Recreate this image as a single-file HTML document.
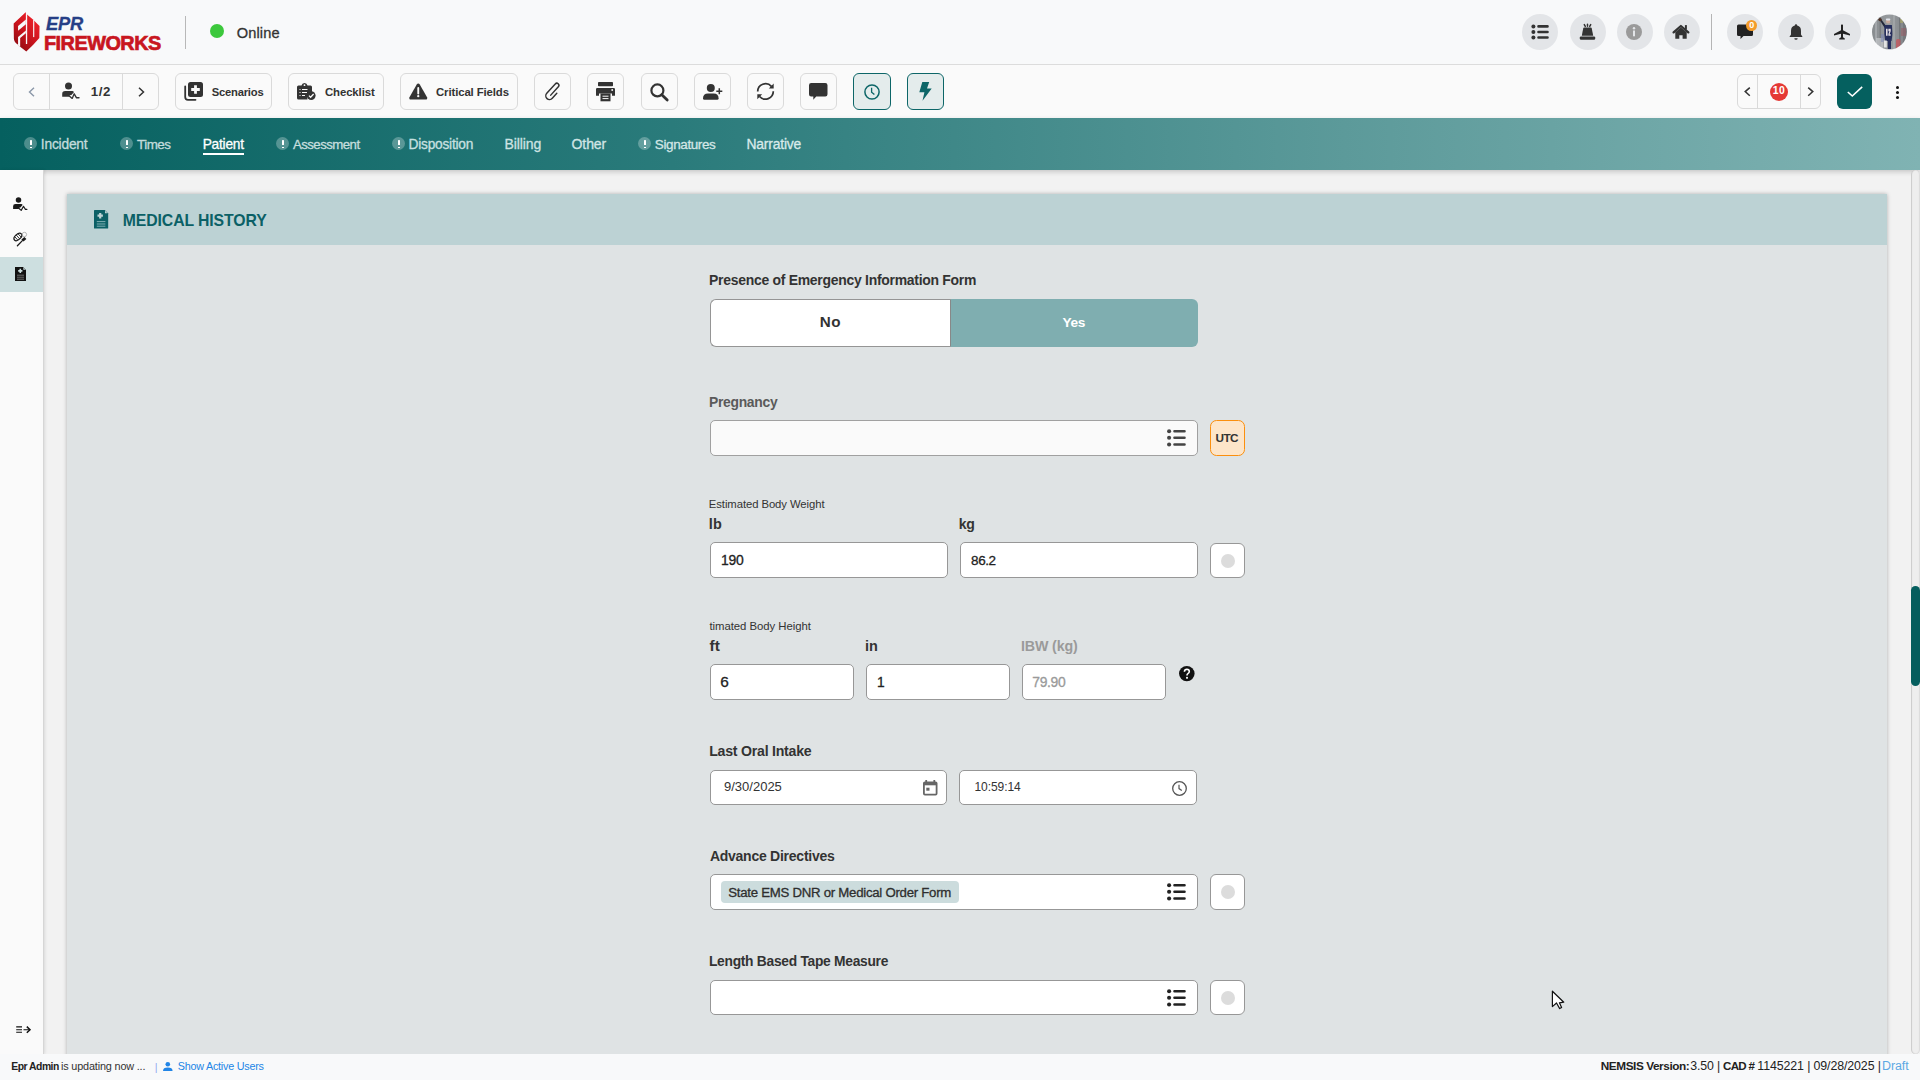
<!DOCTYPE html>
<html><head><meta charset="utf-8">
<style>
*{box-sizing:border-box;margin:0;padding:0}
html,body{width:1920px;height:1080px;overflow:hidden;background:#f2f2f2;font-family:"Liberation Sans",sans-serif;color:#333}
.a{position:absolute}
.t{position:absolute;white-space:pre;font-family:"Liberation Sans",sans-serif}
svg{position:absolute;overflow:visible}
#hdr{left:0;top:0;width:1920px;height:65px;background:#f8f9fa;border-bottom:1px solid #dcdcdc}
#tb{left:0;top:65px;width:1920px;height:53px;background:#fafafa}
#nav{left:0;top:118px;width:1920px;height:52px;background:linear-gradient(90deg,#05605f 0%,#2a7b7b 35%,#5c9a9a 70%,#80b3b3 100%);box-shadow:0 2px 5px rgba(0,0,0,.18)}
#side{left:0;top:170px;width:44px;height:884px;background:#fafafa;border-right:1px solid #d6d6d6;box-shadow:1px 0 3px rgba(0,0,0,.10)}
#foot{left:0;top:1054px;width:1920px;height:26px;background:#f8f9fa}
#card{left:67px;top:194px;width:1820px;height:880px;background:#dfe3e4;box-shadow:0 0 4px rgba(0,0,0,.28)}
#cardh{left:67px;top:194px;width:1820px;height:51px;background:#bcd2d4}
.btn{position:absolute;top:73px;height:37px;border:1px solid #dadada;border-radius:6px;background:#fafafa}
.sq{width:37px}
.act{background:#e4ecec;border:1.4px solid #0d6668}
.circ{position:absolute;top:14px;width:36px;height:36px;border-radius:50%;background:#e3e5e8}
.ex{position:absolute;top:137.1px;width:13.3px;height:13.3px;border-radius:50%;background:rgba(255,255,255,.28)}
.ex:after{content:"";position:absolute;left:5.8px;top:2.8px;width:1.8px;height:5.6px;background:#fff;border-radius:.6px}
.ex:before{content:"";position:absolute;left:5.8px;top:9.6px;width:1.8px;height:1.6px;background:#fff}
.inp{position:absolute;border:1px solid #979797;border-radius:5px;background:#fff}
.rb{position:absolute;width:35px;border:1px solid #979797;border-radius:6px;background:#fff}
.rb:after{content:"";position:absolute;left:50%;top:50%;width:14px;height:14px;margin:-7px 0 0 -7px;border-radius:50%;background:#dcdcdc}
</style></head><body>
<div id="hdr" class="a"></div>
<div id="tb" class="a"></div>
<div id="card" class="a"></div>
<div id="cardh" class="a"></div>
<div id="nav" class="a"></div>
<div id="side" class="a"></div>
<div id="foot" class="a"></div>

<!-- scrollbar -->
<div class="a" style="left:1911px;top:170px;width:9px;height:884px;background:#eeeeee;border-radius:5px;box-shadow:inset 1px 0 1px rgba(0,0,0,.15),inset -1px 0 1px rgba(0,0,0,.08)"></div>
<div class="a" style="left:1911px;top:586px;width:9px;height:100px;background:#055e5e;border-radius:5px"></div>

<!-- ============ HEADER ============ -->
<svg style="left:10px;top:10px" width="34" height="44" viewBox="0 0 835 1080">
 <defs><linearGradient id="lg" x1="0.8" y1="0.1" x2="0.2" y2="0.9"><stop offset="0" stop-color="#f0212a"/><stop offset=".55" stop-color="#c8141d"/><stop offset="1" stop-color="#950b12"/></linearGradient></defs>
 <path d="M385 55 L425 115 L565 235 L595 262 L725 390 L720 690 Q560 880 400 1020 L250 900 L190 850 Q95 780 95 700 L90 330 Z" fill="url(#lg)"/>
 <rect x="390" y="50" width="32" height="785" fill="#f8f9fa"/>
 <rect x="568" y="245" width="28" height="420" fill="#f8f9fa"/>
 <path d="M198 395 L390 230 L390 352 L198 508 Z" fill="#f8f9fa"/>
 <path d="M198 660 L390 505 L390 568 L250 688 L250 905 L185 855 L198 850 Z" fill="#f8f9fa"/>
</svg>
<div class="a" style="left:185px;top:16px;width:1px;height:33px;background:#b8b8b8"></div>
<div class="a" style="left:210px;top:23.8px;width:14.2px;height:14.2px;border-radius:50%;background:#3cc83c"></div>

<div class="circ" style="left:1522px"></div>
<svg style="left:1531px;top:24px" width="18" height="16" viewBox="0 0 18 16">
 <circle cx="2.4" cy="2.4" r="2" fill="#333"/><circle cx="2.4" cy="8" r="2" fill="#333"/><circle cx="2.4" cy="13.5" r="2" fill="#333"/>
 <path d="M7.5 2.4H16.5M7.5 8H16.5M7.5 13.5H16.5" stroke="#333" stroke-width="2.6" stroke-linecap="round"/>
</svg>
<div class="circ" style="left:1569.5px"></div>
<svg style="left:1575px;top:20px" width="24" height="20" viewBox="1575 20 24 20">
 <path d="M1583.2 28.4 Q1583.4 27.6 1584.2 27.6 H1590.8 Q1591.6 27.6 1591.8 28.4 L1593.2 35.8 H1581.8 Z" fill="#333"/>
 <rect x="1579.8" y="36.4" width="15.4" height="3.4" rx="1.2" fill="#333"/>
 <path d="M1584.3 24.6 L1585.3 26.4 M1587.5 24.2 V26.2 M1590.7 24.6 L1589.7 26.4" stroke="#333" stroke-width="1.5" stroke-linecap="round"/>
</svg>
<div class="circ" style="left:1616.5px"></div>
<svg style="left:1626px;top:24px" width="16" height="16" viewBox="0 0 16 16">
 <circle cx="8" cy="8" r="8" fill="#9a9a9a"/>
 <circle cx="8" cy="4.3" r="1.2" fill="#e3e5e8"/><rect x="7" y="6.5" width="2" height="5.8" fill="#e3e5e8"/>
</svg>
<div class="circ" style="left:1663.5px"></div>
<svg style="left:1670px;top:22px" width="22" height="20" viewBox="1670 22 22 20">
 <path d="M1673.6 32.4 L1680.9 26 L1688.3 32.4" stroke="#333" stroke-width="2.3" fill="none" stroke-linecap="round" stroke-linejoin="round"/>
 <rect x="1684.9" y="25.1" width="2" height="4.5" fill="#333"/>
 <path d="M1675.3 32.3 L1680.9 27.6 L1686.7 32.3 V38.8 H1682.6 V35.2 H1679.3 V38.8 H1675.3 Z" fill="#333"/>
</svg>
<div class="a" style="left:1711px;top:14px;width:1px;height:36px;background:#b5b5b5"></div>
<div class="circ" style="left:1726.5px"></div>
<svg style="left:1737px;top:24px" width="16" height="16" viewBox="0 0 16 16">
 <path d="M1.5 0.5 H14.5 Q16 0.5 16 2 V10.5 Q16 12 14.5 12 H6.5 L3.5 15 L3.5 12 H1.5 Q0 12 0 10.5 V2 Q0 0.5 1.5 0.5 Z" fill="#222"/>
</svg>
<div class="a" style="left:1746.2px;top:20.1px;width:10.8px;height:10.8px;border-radius:50%;background:#f39c2b"></div>
<div class="t" style="left:1749.3px;top:20.8px;font-size:9px;line-height:9px;font-weight:bold;color:#fff">0</div>
<div class="circ" style="left:1777.5px"></div>
<svg style="left:1788.5px;top:23.8px" width="14" height="16" viewBox="0 0 14 16">
 <path d="M7 0.3 Q8.2 0.3 8.2 1.6 Q12 2.4 12 7 V10.5 L13.6 13 H0.4 L2 10.5 V7 Q2 2.4 5.8 1.6 Q5.8 0.3 7 0.3 Z" fill="#333"/>
 <path d="M5.3 14.3 H8.7 Q8.7 15.8 7 15.8 Q5.3 15.8 5.3 14.3Z" fill="#333"/>
</svg>
<div class="circ" style="left:1824.5px"></div>
<svg style="left:1834px;top:23.8px" width="16" height="16" viewBox="0 0 16 16">
 <path d="M7 0.8 Q8 0 9 0.8 V6.2 L16 10 V11.5 L9 9.8 V13.2 L10.8 14.6 V15.6 H5.2 V14.6 L7 13.2 V9.8 L0 11.5 V10 L7 6.2 Z" fill="#222"/>
</svg>
<svg style="left:1872px;top:14px" width="35" height="36" viewBox="0 0 35 36">
 <defs><clipPath id="av"><circle cx="17.5" cy="18" r="17.5"/></clipPath>
 <linearGradient id="avg" x1="0" y1="0" x2="1" y2="0"><stop offset="0" stop-color="#868a8d"/><stop offset=".5" stop-color="#979b9e"/><stop offset="1" stop-color="#7c8084"/></linearGradient>
 <filter id="avb"><feGaussianBlur stdDeviation="0.45"/></filter></defs>
 <g clip-path="url(#av)"><g filter="url(#avb)">
  <rect x="-2" y="-2" width="39" height="40" fill="url(#avg)"/>
  <rect x="3" y="0" width="2" height="36" fill="#b4b7ba" opacity=".6"/>
  <rect x="7.5" y="0" width="1.5" height="36" fill="#65696d" opacity=".5"/>
  <rect x="21" y="0" width="2" height="36" fill="#b0b3b6" opacity=".5"/>
  <rect x="27" y="0" width="1.6" height="36" fill="#5d6164" opacity=".5"/>
  <rect x="31" y="4" width="3" height="30" fill="#6d7175" opacity=".6"/>
  <rect x="4" y="24" width="7" height="12" fill="#c5c8ca" opacity=".7"/>
  <rect x="9" y="20" width="3" height="8" fill="#7e88b4" opacity=".6"/>
  <rect x="24" y="25" width="4.5" height="11" rx="1.5" fill="#c05a60" opacity=".85"/>
  <rect x="29" y="14" width="5" height="8" fill="#9a5a62" opacity=".5"/>
  <rect x="28" y="5" width="3" height="4" fill="#b7b35a" opacity=".5"/>
  <path d="M7.6 6 L9.2 5.2 L14.4 12.6 L12.8 14 Z" fill="#232838"/>
  <circle cx="8" cy="5.6" r="1.7" fill="#4e3328"/>
  <circle cx="16.1" cy="7.4" r="2.2" fill="#c7a89a"/>
  <rect x="13.9" y="4.6" width="4.4" height="2" rx="1" fill="#dfe3ea"/>
  <path d="M12.4 11 H19.9 L20.4 20 L19.6 27 H13.2 L12.3 20 Z" fill="#262f5c"/>
  <path d="M14 14.7 H15.6 V21.7 H14 Z M16.4 14.7 H18.7 V17.2 L17.6 20.2 H18.7 V21.7 H16.4 V20 L17.4 17.3 H16.4 Z" fill="#e3dde3"/>
  <rect x="11.8" y="26.5" width="3" height="7" fill="#e4e4e4"/>
  <rect x="15.8" y="26.5" width="3.2" height="8.5" fill="#262f5c"/>
 </g></g>
</svg>

<!-- ============ TOOLBAR ============ -->
<div class="btn" style="left:13px;width:146px"></div>
<div class="a" style="left:49px;top:74px;width:1px;height:35px;background:#dadada"></div>
<div class="a" style="left:122px;top:74px;width:1px;height:35px;background:#dadada"></div>
<svg style="left:27.5px;top:86.5px" width="7" height="10" viewBox="0 0 7 10"><path d="M6 0.8 L1.5 5 L6 9.2" stroke="#8a97a8" stroke-width="1.4" fill="none"/></svg>
<svg style="left:137.5px;top:86.5px" width="7" height="10" viewBox="0 0 7 10"><path d="M1 0.8 L5.5 5 L1 9.2" stroke="#333" stroke-width="1.5" fill="none"/></svg>
<svg style="left:55px;top:78px" width="30" height="25" viewBox="55 78 30 25">
 <circle cx="68.5" cy="85.9" r="3.5" fill="#333"/>
 <path d="M62.2 96.8 V93.9 Q62.2 91.1 65.2 91.1 H72.3 Q73.6 91.2 73.9 92.2 L71.4 95.1 L69.8 95.2 L69 96.8 Z" fill="#333"/>
 <path d="M69.3 95.9 L72.2 98.4 L74.2 93.8 L76.4 97.7 H79" stroke="#333" stroke-width="1.35" fill="none" stroke-linejoin="round" stroke-linecap="round"/>
</svg>

<div class="btn" style="left:175px;width:97px"></div>
<svg style="left:184.2px;top:82px" width="19" height="19" viewBox="0 0 19 19">
 <path d="M1.2 4.5 V15 Q1.2 17.8 4 17.8 H11.5" stroke="#333" stroke-width="1.8" fill="none" stroke-linecap="round"/>
 <rect x="4" y="0" width="15" height="15" rx="2.5" fill="#333"/>
 <path d="M11.5 3.2 V11.8 M7.2 7.5 H15.8" stroke="#fafafa" stroke-width="2.8"/>
</svg>
<div class="btn" style="left:288px;width:96px"></div>
<svg style="left:297px;top:83.2px" width="19" height="17" viewBox="0 0 19 17">
 <path d="M1.5 2.5 H4.5 Q5 0 7.5 0 Q10 0 10.5 2.5 H13.5 Q15 2.5 15 4 V9.5 A5.5 5.5 0 0 0 10.5 16.5 H1.5 Q0 16.5 0 15 V4 Q0 2.5 1.5 2.5 Z" fill="#333"/>
 <circle cx="7.5" cy="2.2" r="0.9" fill="#fafafa"/>
 <path d="M2.5 6.5 H3.5 M5 6.5 H10.5 M2.5 9.5 H3.5 M5 9.5 H10 M2.5 12.5 H3.5 M5 12.5 H8" stroke="#fafafa" stroke-width="1.1"/>
 <circle cx="14.2" cy="12.6" r="4.4" fill="#333"/>
 <path d="M12 12.6 L13.6 14.2 L16.6 11" stroke="#fafafa" stroke-width="1.3" fill="none"/>
</svg>
<div class="btn" style="left:400px;width:118px"></div>
<svg style="left:409.4px;top:82.5px" width="18.5" height="17" viewBox="0 0 18.5 17">
 <path d="M9.25 0.6 Q10.2 0.6 10.8 1.6 L18 14.2 Q18.8 16.4 16.6 16.6 H1.9 Q-0.3 16.4 0.5 14.2 L7.7 1.6 Q8.3 0.6 9.25 0.6 Z" fill="#333"/>
 <path d="M9.25 5 V10.5" stroke="#fafafa" stroke-width="1.9" stroke-linecap="round"/>
 <circle cx="9.25" cy="13.2" r="1.15" fill="#fafafa"/>
</svg>

<div class="btn sq" style="left:534px"></div>
<svg style="left:540px;top:79px" width="26" height="26" viewBox="-12.6 -12.6 26 26">
 <g transform="translate(0.4 0.3) scale(1.22) rotate(42)">
 <path d="M3.1 -1.2 V4.3 A3.05 3.05 0 0 1 -3 4.3 V-6.1 A1.7 1.7 0 0 1 0.4 -6.1 V3.2" stroke="#333" stroke-width="1.2" fill="none" stroke-linecap="round"/>
 </g>
</svg>
<div class="btn sq" style="left:587px"></div>
<svg style="left:596px;top:81.8px" width="19" height="19.3" viewBox="0 0 19 19.3">
 <rect x="2" y="0" width="15" height="4.2" rx=".8" fill="#333"/>
 <path d="M1.2 6 H17.8 Q19 6 19 7.2 V13.8 H16 V11.5 H3 V13.8 H0 V7.2 Q0 6 1.2 6 Z" fill="#333"/>
 <circle cx="16.2" cy="8" r=".9" fill="#fafafa"/>
 <rect x="4.5" y="11.5" width="10" height="7.8" fill="#333"/>
 <path d="M6.5 14.2 H12.5 M6.5 16.6 H12.5" stroke="#fafafa" stroke-width="1"/>
</svg>
<div class="btn sq" style="left:641px"></div>
<svg style="left:650.3px;top:82.9px" width="19" height="18" viewBox="0 0 19 18">
 <circle cx="7.4" cy="7.4" r="6" stroke="#333" stroke-width="2.2" fill="none"/>
 <path d="M11.8 11.8 L17.2 17" stroke="#333" stroke-width="2.8" stroke-linecap="round"/>
</svg>
<div class="btn sq" style="left:694px"></div>
<svg style="left:703px;top:83.7px" width="19.5" height="16" viewBox="0 0 19.5 16">
 <circle cx="7.8" cy="4" r="4" fill="#333"/>
 <path d="M0 14.3 Q0 9.5 5 9.5 H10.6 Q15.6 9.5 15.6 14.3 Q15.6 15.8 14.2 15.8 H1.4 Q0 15.8 0 14.3 Z" fill="#333"/>
 <path d="M16.3 4.2 V10.2 M13.3 7.2 H19.3" stroke="#333" stroke-width="1.5"/>
</svg>
<div class="btn sq" style="left:747px"></div>
<svg style="left:754px;top:80px" width="23" height="23" viewBox="754 80 23 23">
 <path d="M757.7 91.6 A7.85 7.85 0 0 1 771.4 86.3" stroke="#333" stroke-width="1.75" fill="none"/>
 <path d="M773.7 83.6 V88.5 H768.8 Z" fill="#333"/>
 <path d="M773.3 91.2 A7.85 7.85 0 0 1 759.6 96.5" stroke="#333" stroke-width="1.75" fill="none"/>
 <path d="M757.3 99.2 V94.3 H762.2 Z" fill="#333"/>
</svg>
<div class="btn sq" style="left:800px"></div>
<svg style="left:809.3px;top:82.9px" width="18.5" height="17" viewBox="0 0 18.5 17">
 <path d="M2.2 0 H16.3 Q18.5 0 18.5 2.2 V11.2 Q18.5 13.4 16.3 13.4 H7.2 L4.3 16.8 V13.4 H2.2 Q0 13.4 0 11.2 V2.2 Q0 0 2.2 0 Z" fill="#333"/>
</svg>
<div class="btn sq act" style="left:853px;width:38px"></div>
<svg style="left:864px;top:83.5px" width="16" height="16" viewBox="0 0 16 16">
 <circle cx="8" cy="8" r="7.1" stroke="#0d6668" stroke-width="1.5" fill="none"/>
 <path d="M7.6 3.8 V8.2 L10.4 10.6" stroke="#0d6668" stroke-width="1.3" fill="none"/>
</svg>
<div class="btn sq act" style="left:907px;width:37px"></div>
<svg style="left:919.3px;top:82.3px" width="13" height="19" viewBox="0 0 13 19">
 <path d="M3.3 0 H10.2 L8 6.5 H12.7 L3.5 18.8 L5.4 10.2 H0.3 Z" fill="#0d6668"/>
</svg>

<div class="btn" style="left:1737px;width:84px;top:74px;height:35px"></div>
<div class="a" style="left:1757px;top:75px;width:1px;height:33px;background:#dadada"></div>
<div class="a" style="left:1800px;top:75px;width:1px;height:33px;background:#dadada"></div>
<svg style="left:1743.8px;top:86.8px" width="7" height="10" viewBox="0 0 7 10"><path d="M5.8 0.6 L1.2 4.6 L5.8 8.8" stroke="#333" stroke-width="1.5" fill="none"/></svg>
<svg style="left:1807px;top:86.8px" width="7" height="10" viewBox="0 0 7 10"><path d="M1.2 0.6 L5.8 4.6 L1.2 8.8" stroke="#333" stroke-width="1.5" fill="none"/></svg>
<div class="a" style="left:1770px;top:82.9px;width:18px;height:18px;border-radius:50%;background:#e53935"></div>
<div class="a" style="left:1837px;top:74px;width:35px;height:35px;border-radius:6px;background:#05605f"></div>
<svg style="left:1846.5px;top:86.3px" width="16" height="11" viewBox="0 0 16 11"><path d="M0.8 6 L5.3 10 L15.2 0.8" stroke="#fff" stroke-width="1.6" fill="none"/></svg>
<div class="a" style="left:1895.8px;top:86px;width:3.4px;height:3.4px;border-radius:50%;background:#111;box-shadow:0 5px 0 #111,0 10px 0 #111"></div>

<!-- ============ NAV ============ -->
<div class="ex" style="left:24px"></div>
<div class="ex" style="left:120px"></div>
<div class="ex" style="left:276px"></div>
<div class="ex" style="left:392px"></div>
<div class="ex" style="left:638px"></div>
<div class="a" style="left:203px;top:153px;width:41px;height:1.8px;background:#fff"></div>

<!-- ============ SIDEBAR ============ -->
<div class="a" style="left:0;top:257px;width:43px;height:35px;background:#cddfe0"></div>
<svg style="left:0px;top:190px" width="44" height="60" viewBox="0 190 44 60">
 <circle cx="18.5" cy="200.1" r="2.75" fill="#1a1a1a"/>
 <path d="M13.1 208.9 V206.3 Q13.1 204.1 15.5 204.1 H21.2 Q22.4 204.2 22.6 205 L20.4 207.6 L19.2 207.7 L18.6 208.9 Z" fill="#1a1a1a"/>
 <path d="M18.8 208.3 L21.2 210.4 L23.5 206.3 L25.4 209.4 H26.9" stroke="#1a1a1a" stroke-width="1.15" fill="none" stroke-linejoin="round" stroke-linecap="round"/>
 <g transform="rotate(-42 17.9 236.9)">
  <ellipse cx="17.9" cy="236.9" rx="4.6" ry="2.7" fill="none" stroke="#1a1a1a" stroke-width="1.25"/>
  <path d="M15.7 234.8 V239 M17.9 234.4 V239.4 M20.1 234.8 V239" stroke="#1a1a1a" stroke-width=".8"/>
 </g>
 <circle cx="24.4" cy="234.5" r="2.2" fill="none" stroke="#999" stroke-width=".7"/>
 <path d="M21.4 239.4 L24.4 236.9 L26.4 239.1 L23.5 241.6 Z" fill="#1a1a1a"/>
 <path d="M22.4 240.6 L17.4 245.8" stroke="#1a1a1a" stroke-width="1.3" stroke-linecap="round"/>
</svg>
<svg style="left:14.9px;top:267.3px" width="11" height="14" viewBox="0 0 11 14">
 <path d="M0 0 H8 L11 3 V14 H0 Z" fill="#111"/>
 <path d="M8.3 0.4 L10.6 2.7 H8.3 Z" fill="#cddfe0"/>
 <path d="M5.3 1.8 V6 M3.2 3.9 H7.4" stroke="#cddfe0" stroke-width="1.6"/>
 <path d="M2 8.2 H9 M2 10.2 H9 M2 12.2 H9" stroke="#777" stroke-width=".9"/>
</svg>
<svg style="left:15.8px;top:1025.5px" width="15" height="8" viewBox="0 0 15 8">
 <path d="M0.2 0.9 H6 M0.2 3.8 H6 M0.2 6.2 H6" stroke="#111" stroke-width="1.1"/>
 <path d="M7.5 3.7 H13.6" stroke="#333" stroke-width="1.2"/>
 <path d="M10.8 0.6 L14 3.7 L10.8 6.7" stroke="#111" stroke-width="1.5" fill="none"/>
</svg>

<!-- ============ CARD HEADER ICON ============ -->
<svg style="left:93.7px;top:210.1px" width="14.2" height="18.6" viewBox="0 0 14.2 18.6">
 <path d="M0.6 0 H10.8 L14.2 3.4 V18 Q14.2 18.6 13.6 18.6 H0.6 Q0 18.6 0 18 V0.6 Q0 0 0.6 0 Z" fill="#0b6066"/>
 <path d="M11 0.6 L13.6 3.2 H11 Z" fill="#bcd2d4"/>
 <path d="M6.2 3 V8.4 M3.5 5.7 H8.9" stroke="#bcd2d4" stroke-width="2.2"/>
 <path d="M2.8 11.6 H11.4 M2.8 14 H11.4 M2.8 16.2 H11.4" stroke="#7fb0b3" stroke-width="1"/>
</svg>

<!-- ============ FORM ============ -->
<!-- toggle -->
<div class="a" style="left:950px;top:299px;width:248px;height:48px;border-radius:0 6px 6px 0;background:#7faeb0"></div>
<div class="a" style="left:710px;top:299px;width:241px;height:48px;background:#fff;border:1px solid #959595;border-right:1px solid #888;border-radius:6px 0 0 6px"></div>
<!-- pregnancy -->
<div class="inp" style="left:710px;top:420px;width:488px;height:36px;background:#fafafa;border-color:#a0a0a0"></div>
<svg style="left:1167.2px;top:429.3px" width="19" height="17.5" viewBox="0 0 19 17.5">
 <circle cx="2.1" cy="2.3" r="2.05" fill="#444"/><circle cx="2.1" cy="8.8" r="2.05" fill="#444"/><circle cx="2.1" cy="15.5" r="2.05" fill="#444"/>
 <path d="M7.5 2.3H17.5M7.5 8.8H17.5M7.5 15.5H17.5" stroke="#444" stroke-width="2.6" stroke-linecap="round"/>
</svg>
<div class="a" style="left:1210px;top:420px;width:35px;height:36px;border:1.8px solid #fb8f0e;border-radius:6.5px;background:#fde5c9"></div>
<!-- weight -->
<div class="inp" style="left:710px;top:542px;width:238px;height:36px"></div>
<div class="inp" style="left:960px;top:542px;width:238px;height:36px"></div>
<div class="rb" style="left:1210px;top:543px;height:35px"></div>
<!-- height -->
<div class="inp" style="left:710px;top:664px;width:144px;height:36px"></div>
<div class="inp" style="left:866px;top:664px;width:144px;height:36px"></div>
<div class="inp" style="left:1022px;top:664px;width:144px;height:36px"></div>
<svg style="left:1179.2px;top:665.8px" width="15.6" height="15.2" viewBox="0 0 15.6 15.2">
 <ellipse cx="7.8" cy="7.6" rx="7.8" ry="7.6" fill="#111"/>
 <path d="M5.4 5.7 Q5.6 3.3 7.9 3.3 Q10.3 3.4 10.3 5.6 Q10.3 6.9 8.9 7.6 Q8 8.1 8 9.4" stroke="#fff" stroke-width="1.6" fill="none"/>
 <rect x="7.1" y="10.9" width="1.8" height="1.8" fill="#fff"/>
</svg>
<!-- last oral intake -->
<div class="inp" style="left:710px;top:770px;width:237px;height:35px"></div>
<div class="inp" style="left:959px;top:770px;width:238px;height:35px"></div>
<svg style="left:923.4px;top:780px" width="14.5" height="15.5" viewBox="0 0 14.5 15.5">
 <path d="M3.2 0 V3 M11.3 0 V3" stroke="#666" stroke-width="1.8"/>
 <rect x="0.9" y="2.3" width="12.7" height="12.3" rx="1" stroke="#666" stroke-width="1.8" fill="none"/>
 <rect x="0.9" y="2.3" width="12.7" height="3" fill="#666"/>
 <rect x="3.3" y="7.7" width="3.2" height="3" fill="#666"/>
</svg>
<svg style="left:1172px;top:781px" width="15" height="15" viewBox="0 0 15 15">
 <circle cx="7.5" cy="7.5" r="6.8" stroke="#555" stroke-width="1.3" fill="none"/>
 <path d="M7 3.8 V7.6 L9.8 9.6" stroke="#555" stroke-width="1.2" fill="none"/>
</svg>
<!-- advance directives -->
<div class="inp" style="left:710px;top:874px;width:488px;height:36px"></div>
<div class="a" style="left:721px;top:881px;width:238px;height:22px;border-radius:4px;background:#ccdcdd"></div>
<svg style="left:1167.2px;top:883.3px" width="19" height="17.5" viewBox="0 0 19 17.5">
 <circle cx="2.1" cy="2.3" r="2.05" fill="#222"/><circle cx="2.1" cy="8.8" r="2.05" fill="#222"/><circle cx="2.1" cy="15.5" r="2.05" fill="#222"/>
 <path d="M7.5 2.3H17.5M7.5 8.8H17.5M7.5 15.5H17.5" stroke="#222" stroke-width="2.6" stroke-linecap="round"/>
</svg>
<div class="rb" style="left:1210px;top:874px;height:36px"></div>
<!-- length based -->
<div class="inp" style="left:710px;top:980px;width:488px;height:35px"></div>
<svg style="left:1167.2px;top:988.5px" width="19" height="17.5" viewBox="0 0 19 17.5">
 <circle cx="2.1" cy="2.3" r="2.05" fill="#222"/><circle cx="2.1" cy="8.8" r="2.05" fill="#222"/><circle cx="2.1" cy="15.5" r="2.05" fill="#222"/>
 <path d="M7.5 2.3H17.5M7.5 8.8H17.5M7.5 15.5H17.5" stroke="#222" stroke-width="2.6" stroke-linecap="round"/>
</svg>
<div class="rb" style="left:1210px;top:980px;height:35px"></div>

<!-- footer icon -->
<svg style="left:162.8px;top:1061.5px" width="9.6" height="9" viewBox="0 0 9.6 9">
 <circle cx="4.8" cy="2.3" r="2.3" fill="#2185e6"/>
 <path d="M0 9 Q0 5.6 4.8 5.6 Q9.6 5.6 9.6 9 Z" fill="#2185e6"/>
</svg>

<!-- cursor -->
<svg style="left:1551px;top:990px" width="14" height="21" viewBox="0 0 14 21">
 <path d="M1.4 1.2 V16.6 L5.5 13 L8.7 18.6 L10.6 17.4 L8.4 12.8 L12.8 12.2 Z" fill="#fff" stroke="#111" stroke-width="1.2" stroke-linejoin="round"/>
</svg>

<div class='t' style='left:45.90px;top:15.27px;font-size:18.33px;line-height:18.33px;font-weight:bold;color:#263f86;letter-spacing:-0.224px;font-style:italic;-webkit-text-stroke:0.3px #263f86'>EPR</div>
<div class='t' style='left:44.03px;top:34.32px;font-size:19.86px;line-height:19.86px;font-weight:bold;color:#c8161f;letter-spacing:-0.522px;-webkit-text-stroke:0.7px #c8161f'>FIREWORKS</div>
<div class='t' style='left:236.70px;top:25.56px;font-size:14.61px;line-height:14.61px;font-weight:normal;color:#333;letter-spacing:0.151px;-webkit-text-stroke:0.3px #333'>Online</div>
<div class='t' style='left:90.77px;top:84.67px;font-size:13.30px;line-height:13.30px;font-weight:bold;color:#333;letter-spacing:0.600px;'>1/2</div>
<div class='t' style='left:211.70px;top:87.00px;font-size:11.23px;line-height:11.23px;font-weight:bold;color:#333;letter-spacing:-0.209px;'>Scenarios</div>
<div class='t' style='left:325.00px;top:86.98px;font-size:11.39px;line-height:11.39px;font-weight:bold;color:#333;letter-spacing:-0.111px;'>Checklist</div>
<div class='t' style='left:436.00px;top:86.98px;font-size:11.36px;line-height:11.36px;font-weight:bold;color:#333;letter-spacing:-0.106px;'>Critical Fields</div>
<div class='t' style='left:1772.71px;top:85.53px;font-size:10.42px;line-height:10.42px;font-weight:bold;color:#fff;letter-spacing:0.600px;'>10</div>
<div class='t' style='left:40.83px;top:138.00px;font-size:13.78px;line-height:13.78px;font-weight:normal;color:#c3dcdc;letter-spacing:-0.204px;-webkit-text-stroke:0.3px #c3dcdc'>Incident</div>
<div class='t' style='left:137.00px;top:138.06px;font-size:13.40px;line-height:13.40px;font-weight:normal;color:#c3dcdc;letter-spacing:-0.510px;-webkit-text-stroke:0.3px #c3dcdc'>Times</div>
<div class='t' style='left:202.63px;top:137.80px;font-size:13.75px;line-height:13.75px;font-weight:normal;color:#ffffff;letter-spacing:-0.221px;-webkit-text-stroke:0.3px #ffffff'>Patient</div>
<div class='t' style='left:292.90px;top:138.08px;font-size:13.24px;line-height:13.24px;font-weight:normal;color:#c6dede;letter-spacing:-0.541px;-webkit-text-stroke:0.3px #c6dede'>Assessment</div>
<div class='t' style='left:408.53px;top:138.00px;font-size:13.72px;line-height:13.72px;font-weight:normal;color:#c8e0e0;letter-spacing:-0.221px;-webkit-text-stroke:0.3px #c8e0e0'>Disposition</div>
<div class='t' style='left:504.51px;top:136.96px;font-size:14.00px;line-height:14.00px;font-weight:normal;color:#cde3e3;letter-spacing:-0.083px;-webkit-text-stroke:0.3px #cde3e3'>Billing</div>
<div class='t' style='left:571.51px;top:136.95px;font-size:14.05px;line-height:14.05px;font-weight:normal;color:#d0e5e5;letter-spacing:-0.093px;-webkit-text-stroke:0.3px #d0e5e5'>Other</div>
<div class='t' style='left:654.80px;top:138.05px;font-size:13.46px;line-height:13.46px;font-weight:normal;color:#d3e6e6;letter-spacing:-0.365px;-webkit-text-stroke:0.3px #d3e6e6'>Signatures</div>
<div class='t' style='left:746.52px;top:137.98px;font-size:13.85px;line-height:13.85px;font-weight:normal;color:#d8eaea;letter-spacing:-0.170px;-webkit-text-stroke:0.3px #d8eaea'>Narrative</div>
<div class='t' style='left:122.81px;top:213.32px;font-size:15.79px;line-height:15.79px;font-weight:bold;color:#0b6066;letter-spacing:-0.100px;'>MEDICAL HISTORY</div>
<div class='t' style='left:709.04px;top:273.52px;font-size:13.96px;line-height:13.96px;font-weight:bold;color:#333;letter-spacing:-0.276px;'>Presence of Emergency Information Form</div>
<div class='t' style='left:819.72px;top:313.77px;font-size:15.22px;line-height:15.22px;font-weight:bold;color:#333;letter-spacing:0.600px;'>No</div>
<div class='t' style='left:1062.50px;top:316.01px;font-size:13.67px;line-height:13.67px;font-weight:bold;color:#fff;letter-spacing:-0.320px;'>Yes</div>
<div class='t' style='left:708.93px;top:395.78px;font-size:13.88px;line-height:13.88px;font-weight:bold;color:#5a5a5a;letter-spacing:-0.283px;'>Pregnancy</div>
<div class='t' style='left:1215.44px;top:431.62px;font-size:11.77px;line-height:11.77px;font-weight:bold;color:#333;letter-spacing:-0.513px;'>UTC</div>
<div class='t' style='left:708.81px;top:499.29px;font-size:11.31px;line-height:11.31px;font-weight:normal;color:#333;letter-spacing:-0.072px;'>Estimated Body Weight</div>
<div class='t' style='left:708.78px;top:516.79px;font-size:14.46px;line-height:14.46px;font-weight:bold;color:#333;letter-spacing:0.202px;'>lb</div>
<div class='t' style='left:958.71px;top:516.85px;font-size:14.06px;line-height:14.06px;font-weight:bold;color:#333;letter-spacing:-0.149px;'>kg</div>
<div class='t' style='left:720.92px;top:553.97px;font-size:13.91px;line-height:13.91px;font-weight:normal;color:#222;letter-spacing:-0.223px;-webkit-text-stroke:0.3px #222'>190</div>
<div class='t' style='left:971.10px;top:554.04px;font-size:13.50px;line-height:13.50px;font-weight:normal;color:#222;letter-spacing:-0.422px;-webkit-text-stroke:0.3px #222'>86.2</div>
<div class='t' style='left:709.40px;top:621.48px;font-size:11.36px;line-height:11.36px;font-weight:normal;color:#333;letter-spacing:-0.044px;'>timated Body Height</div>
<div class='t' style='left:709.40px;top:638.14px;font-size:15.37px;line-height:15.37px;font-weight:bold;color:#333;letter-spacing:0.202px;'>ft</div>
<div class='t' style='left:865.00px;top:638.68px;font-size:14.49px;line-height:14.49px;font-weight:bold;color:#333;letter-spacing:0.000px;'>in</div>
<div class='t' style='left:1020.92px;top:638.72px;font-size:14.25px;line-height:14.25px;font-weight:bold;color:#9a9a9a;letter-spacing:-0.135px;'>IBW (kg)</div>
<div class='t' style='left:720.37px;top:673.54px;font-size:15.35px;line-height:15.35px;font-weight:normal;color:#222;letter-spacing:0.000px;-webkit-text-stroke:0.3px #222'>6</div>
<div class='t' style='left:876.97px;top:675.79px;font-size:13.82px;line-height:13.82px;font-weight:normal;color:#222;letter-spacing:0.000px;-webkit-text-stroke:0.3px #222'>1</div>
<div class='t' style='left:1032.34px;top:675.78px;font-size:13.88px;line-height:13.88px;font-weight:normal;color:#9a9a9a;letter-spacing:-0.355px;-webkit-text-stroke:0.3px #9a9a9a'>79.90</div>
<div class='t' style='left:709.23px;top:743.84px;font-size:14.14px;line-height:14.14px;font-weight:bold;color:#333;letter-spacing:-0.236px;'>Last Oral Intake</div>
<div class='t' style='left:724.00px;top:780.11px;font-size:13.03px;line-height:13.03px;font-weight:normal;color:#333;letter-spacing:-0.006px;'>9/30/2025</div>
<div class='t' style='left:974.51px;top:781.38px;font-size:12.03px;line-height:12.03px;font-weight:normal;color:#333;letter-spacing:-0.078px;'>10:59:14</div>
<div class='t' style='left:709.90px;top:848.76px;font-size:14.01px;line-height:14.01px;font-weight:bold;color:#333;letter-spacing:-0.252px;'>Advance Directives</div>
<div class='t' style='left:728.24px;top:886.18px;font-size:13.23px;line-height:13.23px;font-weight:normal;color:#2e2e2e;letter-spacing:-0.265px;-webkit-text-stroke:0.3px #2e2e2e'>State EMS DNR or Medical Order Form</div>
<div class='t' style='left:708.94px;top:955.04px;font-size:13.82px;line-height:13.82px;font-weight:bold;color:#333;letter-spacing:-0.284px;'>Length Based Tape Measure</div>
<div class='t' style='left:11.28px;top:1061.59px;font-size:10.36px;line-height:10.36px;font-weight:bold;color:#222;letter-spacing:-0.492px;'>Epr Admin</div>
<div class='t' style='left:61.03px;top:1060.51px;font-size:10.85px;line-height:10.85px;font-weight:normal;color:#333;letter-spacing:-0.164px;'>is updating now ...</div>
<div class='t' style='left:154.83px;top:1061.79px;font-size:10.66px;line-height:10.66px;font-weight:normal;color:#8fa8f0;letter-spacing:0.000px;'>|</div>
<div class='t' style='left:177.74px;top:1060.52px;font-size:10.78px;line-height:10.78px;font-weight:normal;color:#2185e6;letter-spacing:-0.220px;'>Show Active Users</div>
<div class='t' style='left:1600.76px;top:1060.41px;font-size:11.79px;line-height:11.79px;font-weight:bold;color:#222;letter-spacing:-0.428px;'>NEMSIS Version:</div>
<div class='t' style='left:1690.32px;top:1060.33px;font-size:12.32px;line-height:12.32px;font-weight:normal;color:#222;letter-spacing:-0.129px;'>3.50 |</div>
<div class='t' style='left:1723.00px;top:1061.45px;font-size:11.57px;line-height:11.57px;font-weight:bold;color:#222;letter-spacing:-0.718px;'>CAD #</div>
<div class='t' style='left:1757.32px;top:1060.32px;font-size:12.38px;line-height:12.38px;font-weight:normal;color:#222;letter-spacing:-0.109px;'>1145221 | 09/28/2025 |</div>
<div class='t' style='left:1882.01px;top:1060.31px;font-size:12.44px;line-height:12.44px;font-weight:normal;color:#5da8e4;letter-spacing:-0.087px;'>Draft</div>
</body></html>
